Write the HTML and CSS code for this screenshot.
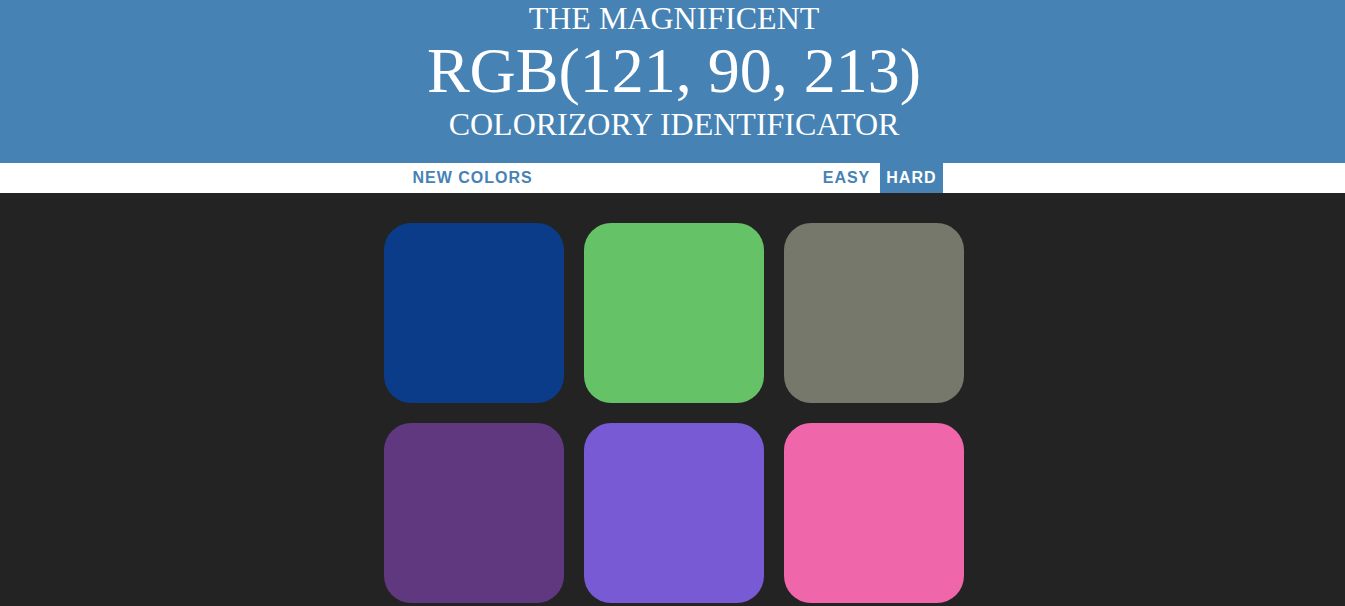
FILE: index.html
```html
<!DOCTYPE html>
<html>
<head>
<meta charset="utf-8">
<link rel="stylesheet" href="styles.css">
</head>
<body>
<header class="title">
  <div class="line small">The Magnificent</div>
  <div class="line big">RGB(121, 90, 213)</div>
  <div class="line small">Colorizory Identificator</div>
</header>
<nav class="stripe">
  <button class="btn">New Colors</button>
  <span class="message"></span>
  <button class="btn">Easy</button>
  <button class="btn selected">Hard</button>
</nav>
<main class="board">
  <div class="grid">
    <div class="square" style="background: rgb(11, 60, 138)"></div>
    <div class="square" style="background: rgb(102, 194, 102)"></div>
    <div class="square" style="background: rgb(118, 120, 107)"></div>
    <div class="square" style="background: rgb(95, 56, 128)"></div>
    <div class="square" style="background: rgb(121, 90, 213)"></div>
    <div class="square" style="background: rgb(240, 102, 170)"></div>
  </div>
</main>
</body>
</html>
```

FILE: styles.css
```css
html, body {
  margin: 0;
  padding: 0;
}
body {
  background: #232323;
  font-family: "Liberation Serif", "Times New Roman", serif;
  overflow: hidden;
}
.title {
  background: rgb(70, 130, 180);
  color: #fff;
  text-align: center;
  text-transform: uppercase;
  padding: 1px 0 21px 3px;
  line-height: 1.1;
}
.line.small {
  font-size: 32px;
}
.line.big {
  font-size: 64px;
}
.stripe {
  background: #fff;
  height: 30px;
  display: flex;
  justify-content: center;
  align-items: stretch;
  gap: 4px;
  padding-left: 4px;
}
.btn {
  border: none;
  background: none;
  margin: 0;
  padding: 0 6px;
  font-family: "Liberation Sans", Arial, sans-serif;
  font-size: 16px;
  font-weight: 700;
  letter-spacing: 1px;
  text-transform: uppercase;
  color: rgb(70, 130, 180);
  height: 100%;
}
.btn.selected {
  background: rgb(70, 130, 180);
  color: #fff;
}
.message {
  width: 270px;
}
.board {
  display: flex;
  justify-content: center;
  padding: 30px 0 0 3px;
}
.grid {
  display: grid;
  grid-template-columns: repeat(3, 180px);
  gap: 20px;
}
.square {
  width: 180px;
  height: 180px;
  border-radius: 27px;
}
```
